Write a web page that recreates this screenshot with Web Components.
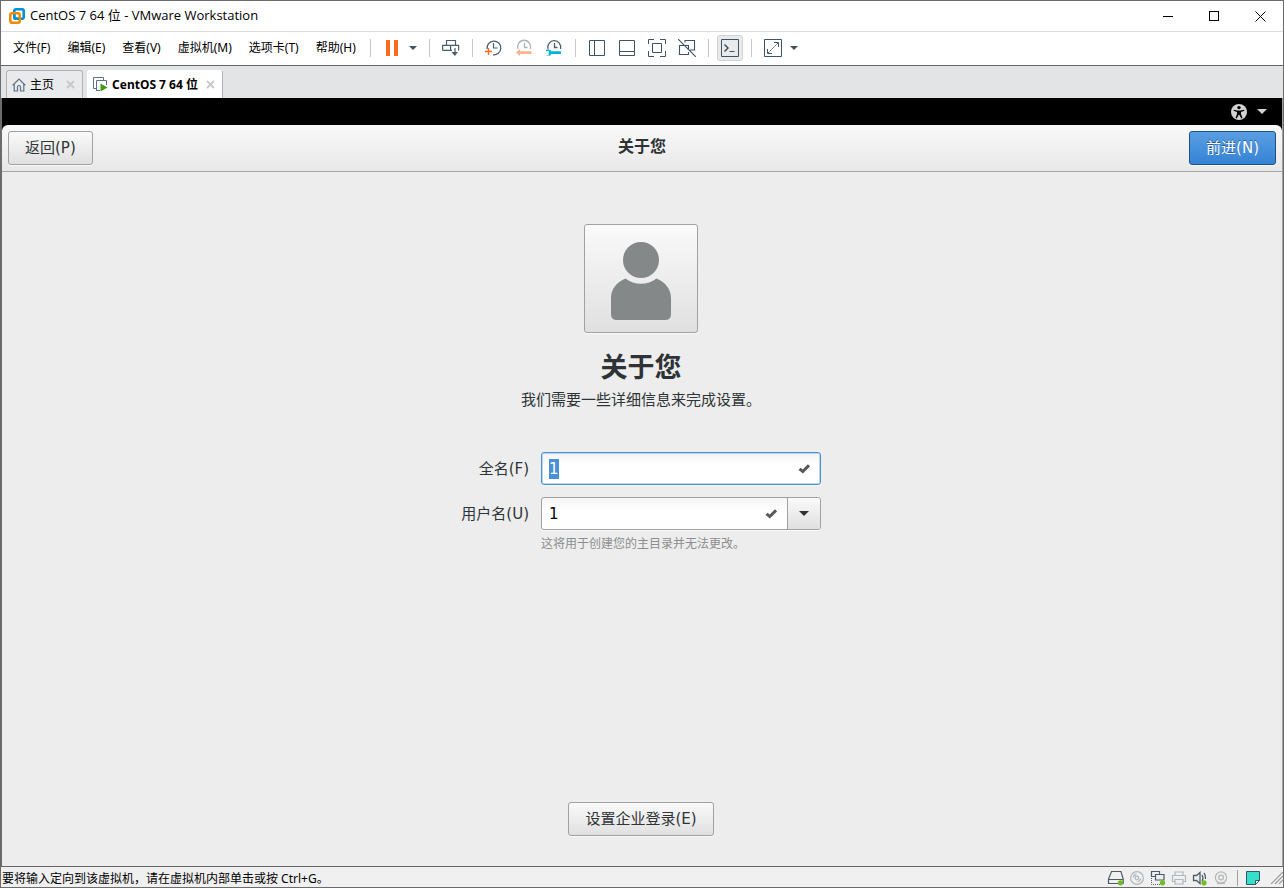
<!DOCTYPE html>
<html lang="zh-CN">
<head>
<meta charset="utf-8">
<title>CentOS 7 64 位 - VMware Workstation</title>
<style>
html, body { margin: 0; height: 100%; }
body { font-family: "Noto Sans", "Noto Sans CJK SC", sans-serif; font-size: 12px; line-height: 16px; color: #000; }
</style>
</head>
<body>
<vm-window></vm-window>
<script>
const ICONS = {
  logo: [18, 18, '<g fill="none" stroke-width="2.6"><rect x="6.3" y="2.3" width="9.4" height="9.4" rx="1.6" stroke="#0091d5"/><rect x="2.3" y="6.3" width="9.4" height="9.4" rx="1.6" stroke="#f08b00"/><path d="M6.3 7.6v2.6q0 1.5 1.5 1.5h2.6" stroke="#0091d5"/></g>'],
  minimize: [11, 11, '<path d="M0 5.5h10" stroke="#000"/>'],
  maximize: [11, 11, '<rect x=".5" y=".5" width="9" height="9" fill="none" stroke="#000"/>'],
  close: [11, 11, '<path d="M.5.5l10 10M10.500.5l-10 10" stroke="#000" fill="none"/>'],
  pause: [12, 16, '<path d="M0 0h4v16H0zM8 0h4v16H8z" fill="#ff6a1f"/>'],
  caret: [8, 4, '<path d="M0 0h8L4 4z" fill="#3f5362"/>'],
  send: [18, 18, '<g fill="none" stroke="#4a5d6b" stroke-width="1.2"><path d="M4.500 6.500v-5h9v5M.6 11.400v-5h16v5M.6 11.400h9.400M8.600 6.500v5M13 9v7"/></g><path d="M9.500 13h6.500l-3.200 4z" fill="#4a5d6b"/>'],
  snapshot: [18, 18, '<g fill="none"><path d="M2.100 10A6.900 6.900 0 1 1 8 15.800" stroke="#4a5d6b" stroke-width="1.300"/><path d="M8.500 4v5h4" stroke="#4a5d6b" stroke-width="1.200"/><path d="M0 12.500h7M3.500 9v7" stroke="#ff6a1f" stroke-width="1.400"/></g>'],
  revert: [18, 18, '<g fill="none" stroke="#abb3ba" stroke-width="1.300"><path d="M3 10A6.500 6.500 0 1 1 15.200 10M9.500 4v4.500h3"/></g><path d="M1 13.500l4-3.500v2.200h11.500v2.800H5V17z" fill="#ffb08c"/>'],
  manage: [18, 18, '<g fill="none" stroke="#4a5d6b" stroke-width="1.300"><path d="M3 10A6.500 6.500 0 1 1 15.500 10M9.500 4v4.500h3"/></g><path d="M1 10.800c3-1 5 0 5.300 1.400H16v2.800H6.300C5.500 17 3 17.300 1 16.200h2.700v-4.200H1z" fill="#00b5d8"/>'],
  sidebar: [16, 16, '<path d="M.5.5h15v15H.5zM5.500.5v15" fill="none" stroke="#3f5362"/>'],
  thumbs: [16, 16, '<path d="M.5.5h15v15H.5zM.5 11.500h15" fill="none" stroke="#3f5362"/>'],
  fullscreen: [18, 18, '<path d="M.5 5V.5H6M12 .5h5.500V5M17.500 12v5.500H12M6 17.500H.5V12M4.500 4.500h9v9h-9z" fill="none" stroke="#3f5362"/>'],
  unity: [18, 18, '<path d="M7 3.500V1.500h9.500v9.500H12M6 6.500H1.500v9h9V13M6.500 6.500h4v4M0 0l18 18" fill="none" stroke="#3f5362" stroke-width="1.100"/>'],
  console: [18, 18, '<path d="M.5.5h17v17H.5z" fill="none" stroke="#3f5362"/><path d="M3.500 5.500L7 9l-3.500 3.500" fill="none" stroke="#3f5362" stroke-width="1.500"/><path d="M8.500 12.500h5" stroke="#3f5362"/>'],
  stretch: [18, 18, '<path d="M.5.5h17v17H.5zM10 3.500h4.500V8M3.500 10v4.500H8" fill="none" stroke="#3f5362"/><path d="M4 14L14 4" stroke="#3f5362" stroke-dasharray="2 1"/>'],
  home: [14, 14, '<path d="M.7 7.200L7 1l6.300 6.200M2.200 6v7h3.300V9q0-1.500 1.500-1.500T8.500 9v4h3.300V6" fill="none" stroke="#5d7385" stroke-width="1.200"/>'],
  machine: [15, 15, '<path d="M3 11.500H.5V.5h10V3M3.500 14V3.500h10V8M3.500 13.500H7" fill="none" stroke="#5d7385"/><path d="M7.500 6.500v8l7-4z" fill="#3f9c1c"/>'],
  x: [9, 9, '<path d="M1 1l7 7M8 1L1 8" stroke="#c6c8ca" stroke-width="1.800"/>'],
  access: [16, 16, '<circle cx="8" cy="8" r="8" fill="#d3d3d3"/><circle cx="8" cy="3.600" r="1.700"/><path d="M2.800 5.700l3.700.8h3l3.700-.8.2 1-3.400 1.300v2l1.500 4-1.200.5L8.300 10.800h-.6L5.700 14.500l-1.200-.5 1.500-4V8L2.600 6.700z"/>'],
  down: [10, 5, '<path d="M0 0h10L5 5z" fill="currentColor"/>'],
  user: [60, 80, '<g fill="#848888"><circle cx="30" cy="19" r="18"/><path d="M14.500 37.500C6 41 0 48 0 57v16q0 6 6 6h48q6 0 6-6V57C60 48 54 41 45.500 37.500C37 44.500 23 44.500 14.500 37.500z"/></g>'],
  check: [12, 10, '<path d="M1.500 4.800L4.800 7.500 11 1.300" fill="none" stroke="#555a5a" stroke-width="3"/>'],
  disk: [17, 16, '<path d="M4.500 1.500h9.500L16.200 9v4.500H1.500V9zM1.500 9.500h14.700" fill="none" stroke="#4a5d6b" stroke-width="1.200"/><circle cx="13.500" cy="12.800" r="2.600" fill="#6cbd1e"/>'],
  cd: [16, 16, '<g fill="none" stroke="#b1b7bb" stroke-width="1.200"><circle cx="8" cy="8" r="6.400"/><circle cx="8" cy="8" r="1.800"/><path d="M4.200 7.500A4 4 0 0 1 7.500 4.200M11.800 8.500A4 4 0 0 1 8.500 11.800"/></g>'],
  net: [16, 16, '<path d="M5.500 6.500H1.500v-5h8v3M5.500 4.500h8.500v5.500h-8.500z" fill="#eee" stroke="#4a5d6b" stroke-width="1.200"/><path d="M1.500 8v6.500H10" fill="none" stroke="#4a5d6b" stroke-dasharray="1 1"/><circle cx="12.500" cy="12.800" r="2.600" fill="#6cbd1e"/>'],
  printer: [16, 16, '<path d="M4 5V2h8v3M4 11.500H1.500v-6h13v6H12M4 9.500h8v4.500H4z" fill="none" stroke="#b1b7bb" stroke-width="1.200"/>'],
  sound: [16, 16, '<path d="M1.500 5.500h3L8 2.500v11L4.500 10.500h-3zM10 5q2 3 0 6M12 3q2 2.500 1.500 6" fill="none" stroke="#4a5d6b" stroke-width="1.300"/><circle cx="12" cy="12.800" r="2.600" fill="#6cbd1e"/>'],
  camera: [16, 16, '<g fill="none" stroke="#b1b7bb" stroke-width="1.200"><circle cx="8" cy="7.500" r="5.600"/><circle cx="8" cy="7.500" r="2.400"/><path d="M4 13.500h8"/></g>'],
  note: [15, 15, '<path d="M.5.5h13v9l-4 4h-9z" fill="#35dfca" stroke="#37566b"/><path d="M9.500 13.500v-4h4z" fill="#fff" stroke="#37566b"/>'],
  grip: [12, 12, '<path d="M0 12L12 0M4 12l8-8M8 12l4-4" stroke="#9a9a9a" stroke-width="1.200"/>']
};

function define(name, html, ready) {
  const template = document.createElement('template');
  template.innerHTML = html;
  customElements.define(name, class extends HTMLElement {
    connectedCallback() {
      if (this.shadowRoot) return;
      const root = this.attachShadow({ mode: 'open' });
      root.append(template.content.cloneNode(true));
      if (ready) ready(this, root);
    }
  });
}

define('ui-icon', '<style>:host{display:inline-flex;flex:none}svg{display:block}</style><svg aria-hidden="true"></svg>', (host, root) => {
  const [w, h, body] = ICONS[host.getAttribute('name')];
  const svg = root.querySelector('svg');
  svg.setAttribute('width', w);
  svg.setAttribute('height', h);
  svg.setAttribute('viewBox', `0 0 ${w} ${h}`);
  svg.innerHTML = body;
});

define('title-bar', `<style>
:host{display:flex;align-items:center;height:30px;background:#fff;border-bottom:1px solid #dcdcdc;padding-left:7px;gap:4px}
h1{flex:1;margin:0;padding-bottom:2px;font-family:"Open Sans","Noto Sans CJK SC",sans-serif;font-size:13px;font-weight:400;line-height:16px}
.controls{display:flex}
button{width:46px;height:30px;border:0;padding:0;background:none;display:flex;align-items:center;justify-content:center}
</style>
<ui-icon name="logo"></ui-icon><h1><slot></slot></h1>
<div class="controls"><button aria-label="最小化"><ui-icon name="minimize"></ui-icon></button><button aria-label="最大化"><ui-icon name="maximize"></ui-icon></button><button aria-label="关闭"><ui-icon name="close"></ui-icon></button></div>`);

define('menu-item', `<style>
:host{display:block}
button{font:inherit;color:inherit;border:0;background:none;padding:8px;white-space:nowrap;display:block}
</style><button><slot></slot></button>`);

define('tool-button', `<style>
:host{display:flex;justify-content:center;width:30px}
:host([small]){width:12px}
button{width:26px;height:26px;box-sizing:border-box;border:1px solid transparent;border-radius:3px;padding:0;background:none;display:flex;align-items:center;justify-content:center}
:host([small]) button{width:12px}
:host([pressed]) button{background:#e9eaeb;border-color:#d0d0d0}
</style><button></button>`, (host, root) => {
  const button = root.querySelector('button');
  button.innerHTML = `<ui-icon name="${host.getAttribute('icon')}"></ui-icon>`;
  button.setAttribute('aria-label', host.getAttribute('label'));
});

define('menu-bar', `<style>
:host{display:flex;align-items:center;height:31px;padding:0 0 2px 4px;background:#fff;border-bottom:1px solid #666}
nav,.tools{display:flex;align-items:center}
nav{gap:1px}
hr{width:1px;height:18px;border:0;margin:0 6px;background:#c8c8c8}
.gap{margin-right:4px}
</style>
<nav><menu-item>文件(F)</menu-item><menu-item>编辑(E)</menu-item><menu-item>查看(V)</menu-item><menu-item>虚拟机(M)</menu-item><menu-item>选项卡(T)</menu-item><menu-item>帮助(H)</menu-item></nav>
<div class="tools"><hr>
<tool-button icon="pause" label="挂起"></tool-button><tool-button class="gap" small icon="caret" label="电源选项"></tool-button><hr>
<tool-button icon="send" label="发送按键"></tool-button><hr>
<tool-button icon="snapshot" label="拍摄快照"></tool-button><tool-button icon="revert" label="恢复快照"></tool-button><tool-button icon="manage" label="管理快照"></tool-button><hr>
<tool-button icon="sidebar" label="显示库"></tool-button><tool-button icon="thumbs" label="缩略图栏"></tool-button><tool-button icon="fullscreen" label="全屏"></tool-button><tool-button icon="unity" label="Unity"></tool-button><hr>
<tool-button pressed icon="console" label="控制台视图"></tool-button><hr>
<tool-button icon="stretch" label="拉伸"></tool-button><tool-button small icon="caret" label="拉伸选项"></tool-button></div>`);

define('page-tab', `<style>
:host{display:flex;align-items:center;box-sizing:border-box;height:28px;padding:0 7px 0 5px;border:1px solid #b0b4b8;border-bottom:0;border-radius:3px 3px 0 0;background:#e9eaeb;white-space:nowrap}
:host([selected]){background:#fff;font-weight:700;border-left-color:#fff;border-top-color:#fff}
span{margin:0 12px 0 4px}
:host([selected]) span{margin-right:8px}
button{border:0;padding:0;background:none;display:flex}
</style><slot name="icon"></slot><span><slot></slot></span><button aria-label="关闭标签"><ui-icon name="x"></ui-icon></button>`);

define('tab-strip', `<style>
:host{display:flex;align-items:flex-end;gap:4px;height:32px;padding-left:5px;background:#e3e4e6}
</style><slot></slot>`);

define('guest-panel', `<style>
:host{display:flex;justify-content:flex-end;align-items:center;height:27px;padding-right:15px;background:#000;color:#d3d3d3}
button{border:0;padding:0;background:none;color:inherit;display:flex;align-items:center;gap:10px}
</style><button aria-label="辅助功能"><ui-icon name="access"></ui-icon><ui-icon name="down"></ui-icon></button>`);

define('gtk-button', `<style>
:host{display:block}
button{display:block;height:34px;padding:0 16px;border:1px solid #a1a1a1;border-radius:3px;background:linear-gradient(#fafafa,#e0e0e0);box-shadow:0 1px #f9f9f9;font:inherit;font-size:15px;line-height:20px;color:#2e3436;white-space:nowrap}
:host([suggested]) button{background:linear-gradient(#5a9ee2,#3583d5);border-color:#1c5187;color:#fff;text-shadow:0 -1px #285d97}
</style><button><slot></slot></button>`);

define('wizard-header', `<style>
:host{display:block;background:#000}
header{display:grid;grid-template-columns:1fr auto 1fr;align-items:center;height:46px;padding:0 6px;background:linear-gradient(#f9f9f9,#e8e8e8);border-bottom:1px solid #a6a6a6;border-radius:6px 6px 0 0}
h2{margin:0;padding-bottom:2px;font-size:16px;line-height:20px;color:#2e3436}
.end{justify-self:end}.start{justify-self:start}
</style><header><gtk-button class="start"><slot name="back"></slot></gtk-button><h2><slot></slot></h2><gtk-button class="end" suggested><slot name="next"></slot></gtk-button></header>`);

define('form-row', `<style>
:host{display:grid;grid-template-columns:68px 1fr;column-gap:12px;align-items:center;font-size:15px;line-height:20px;color:#2e3436}
label{text-align:right;white-space:nowrap}
.box{display:flex;align-items:center;height:33px;box-sizing:border-box;border:1px solid #a1a1a1;border-radius:3px;background:linear-gradient(#f4f4f4,#fff 40%);box-shadow:0 1px #f9f9f9;overflow:hidden}
.box:focus-within{border-color:#4a90d9;box-shadow:inset 0 0 0 1px #b9d6f2,0 1px #f9f9f9}
input{flex:1;min-width:0;border:0;outline:0;padding:0 0 0 7px;background:none;font:inherit;color:#000}
input::selection{background:#4a90d9;color:#fff}
ui-icon{margin-right:10px}
button{align-self:stretch;width:33px;border:0;border-left:1px solid #a1a1a1;padding:0;background:linear-gradient(#fafafa,#e0e0e0);color:#2e3436;display:flex;align-items:center;justify-content:center}
button ui-icon{margin:0}
:host(:not([choices])) button{display:none}
p{grid-column:2;margin:6px 0 0;font-size:12px;line-height:16px;color:#8b8e8f}
p:empty{display:none}
</style>
<label for="field"></label><div class="box"><input id="field" type="text"><ui-icon name="check"></ui-icon><button type="button" aria-label="选择用户名"><ui-icon name="down"></ui-icon></button></div><p></p>`, (host, root) => {
  root.querySelector('label').textContent = host.getAttribute('label');
  root.querySelector('input').value = host.getAttribute('value');
  root.querySelector('p').textContent = host.getAttribute('hint') || '';
  if (host.hasAttribute('active')) {
    root.querySelector('input').focus();
    root.querySelector('input').select();
  }
});

define('account-page', `<style>
:host{display:flex;flex-direction:column;align-items:center;flex:1;background:#ededed;color:#2e3436;padding:52px 2px 30px 0;min-height:0}
.avatar{display:flex;align-items:center;justify-content:center;width:114px;height:109px;border:1px solid #a1a1a1;border-radius:3px;background:linear-gradient(#fafafa,#e0e0e0);box-shadow:0 1px #f9f9f9;padding:4px 0 0}
h2{margin:17px 0 0;font-size:27px;line-height:36px}
p{margin:4px 0 0;font-size:15px;line-height:20px}
form{display:grid;gap:12px;width:360px;max-width:100%;margin:42px 0 auto}
</style>
<button class="avatar" aria-label="头像"><ui-icon name="user"></ui-icon></button>
<h2>关于您</h2><p>我们需要一些详细信息来完成设置。</p>
<form><form-row active label="全名(F)" value="1"></form-row><form-row choices label="用户名(U)" value="1" hint="这将用于创建您的主目录并无法更改。"></form-row></form>
<gtk-button>设置企业登录(E)</gtk-button>`);

define('status-bar', `<style>
:host{display:flex;align-items:center;height:20px;border-top:1px solid #666;background:#f0f0f0}
span{flex:1;padding:3px 0 0 1px}
.tray{display:flex;align-items:center;gap:5px;padding-top:2px}
hr{width:1px;height:16px;border:0;margin:0 3px;background:#a0a0a0}
.grip{margin-left:5px}
</style><span><slot></slot></span>
<div class="tray"><ui-icon name="disk"></ui-icon><ui-icon name="cd"></ui-icon><ui-icon name="net"></ui-icon><ui-icon name="printer"></ui-icon><ui-icon name="sound"></ui-icon><ui-icon name="camera"></ui-icon><hr><ui-icon name="note"></ui-icon><ui-icon class="grip" name="grip"></ui-icon></div>`);

define('vm-window', `<style>
:host{display:flex;flex-direction:column;box-sizing:border-box;min-height:100vh;border:1px solid #6b6b6b}
main{flex:1;display:flex;flex-direction:column;border-left:1px solid #6b6b6b;border-right:1px solid #a0a0a0;font-family:"DejaVu Sans","Noto Sans CJK SC",sans-serif}
</style>
<title-bar>CentOS 7 64 位 - VMware Workstation</title-bar>
<menu-bar></menu-bar>
<tab-strip><page-tab><ui-icon slot="icon" name="home"></ui-icon>主页</page-tab><page-tab selected><ui-icon slot="icon" name="machine"></ui-icon>CentOS 7 64 位</page-tab></tab-strip>
<main><guest-panel></guest-panel>
<wizard-header><span slot="back">返回(P)</span><span slot="next">前进(N)</span>关于您</wizard-header>
<account-page></account-page></main>
<status-bar>要将输入定向到该虚拟机，请在虚拟机内部单击或按 Ctrl+G。</status-bar>`);
</script>
</body>
</html>
